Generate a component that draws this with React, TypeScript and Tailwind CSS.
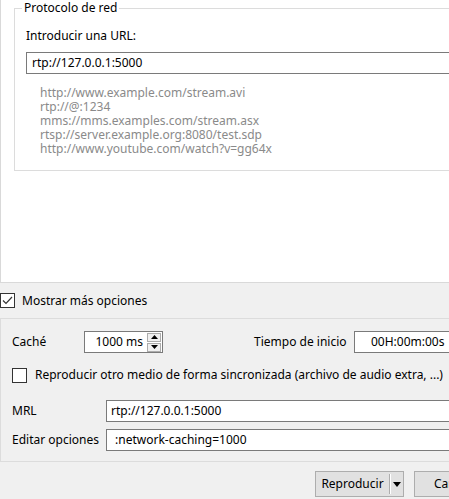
import React from "react";

function Check({ checked, className = "" }: { checked?: boolean; className?: string }) {
  return (
    <div className={"w-[15px] h-[15px] border border-[#333333] bg-white flex items-center justify-center shrink-0 " + className}>
      {checked && (
        <svg width="11" height="11" viewBox="0 0 11 11">
          <polyline points="1,5.5 4,8.5 10,2" fill="none" stroke="#333333" strokeWidth="1.2" />
        </svg>
      )}
    </div>
  );
}

export default function App() {
  return (
    <div className="w-[449px] h-[499px] overflow-hidden bg-[#f0f0f0] font-['Noto_Sans',sans-serif] text-[12px] leading-[16px] text-black">
      {/* URL panel */}
      <div className="w-[480px] h-[283px] bg-white border-l border-b border-[#d9d9d9]">
        <fieldset className="ml-[13px] w-[480px] border border-[#dcdcdc] px-[11px] pb-[14px]">
          <legend className="ml-[-4px] px-[2px]">Protocolo de red</legend>
          <div className="mt-[12px] leading-[16px]">Introducir una URL:</div>
          <div className="mt-[8px] h-[22px] border border-[#7a7a7a] bg-white flex items-center pl-[5px]">
            rtp://127.0.0.1:5000
          </div>
          <div className="mt-[12px] pl-[14px] text-[#8a8a8a] leading-[14px]">
            <div>http://www.example.com/stream.avi</div>
            <div>rtp://@:1234</div>
            <div>mms://mms.examples.com/stream.asx</div>
            <div>rtsp://server.example.org:8080/test.sdp</div>
            <div>http://www.youtube.com/watch?v=gg64x</div>
          </div>
        </fieldset>
      </div>

      {/* Show more options */}
      <div className="mt-[10px] flex items-center h-[15px]">
        <Check checked />
        <span className="ml-[7px] whitespace-nowrap">Mostrar más opciones</span>
      </div>

      {/* Options panel */}
      <div className="mt-[10px] w-[480px] h-[144px] border border-[#dcdcdc] pl-[11px] pt-[12px]">
        <div className="flex items-center h-[22px]">
          <span className="w-[72px] shrink-0">Caché</span>
          <div className="w-[79px] h-[22px] border border-[#7a7a7a] bg-white flex items-center shrink-0">
            <span className="flex-1 text-right pr-[4px]">1000 ms</span>
            <div className="flex flex-col mr-[1px] gap-[1px]">
              <div className="w-[14px] h-[9px] border border-[#acacac] bg-[#f0f0f0] flex items-center justify-center">
                <svg width="7" height="4" viewBox="0 0 7 4"><polygon points="0,4 7,4 3.5,0" fill="#000" /></svg>
              </div>
              <div className="w-[14px] h-[9px] border border-[#acacac] bg-[#f0f0f0] flex items-center justify-center">
                <svg width="7" height="4" viewBox="0 0 7 4"><polygon points="0,0 7,0 3.5,4" fill="#000" /></svg>
              </div>
            </div>
          </div>
          <span className="ml-[91px] w-[100px] shrink-0 whitespace-nowrap">Tiempo de inicio</span>
          <div className="w-[120px] h-[22px] border border-[#7a7a7a] bg-white flex items-center pl-[16px] shrink-0">
            00H:00m:00s
          </div>
        </div>

        <div className="mt-[14px] flex items-center h-[16px]">
          <Check />
          <span className="ml-[8px] whitespace-nowrap">Reproducir otro medio de forma sincronizada (archivo de audio extra, ...)</span>
        </div>

        <div className="mt-[17px] flex items-center h-[22px]">
          <span className="w-[94px] shrink-0">MRL</span>
          <div className="flex-1 h-[22px] border border-[#7a7a7a] bg-white flex items-center pl-[4px]">
            rtp://127.0.0.1:5000
          </div>
        </div>
        <div className="mt-[7px] flex items-center h-[22px]">
          <span className="w-[94px] shrink-0 whitespace-nowrap">Editar opciones</span>
          <div className="flex-1 h-[22px] border border-[#7a7a7a] bg-white flex items-center pl-[8px]">
            :network-caching=1000
          </div>
        </div>
      </div>

      {/* Buttons */}
      <div className="mt-[9px] flex pl-[315px] gap-[10px]">
        <div className="w-[89px] h-[26px] border border-[#adadad] bg-[#e1e1e1] flex items-stretch shrink-0">
          <div className="w-[73px] flex items-center justify-center">Reproducir</div>
          <div className="w-[1px] bg-[#adadad] my-[2px]" />
          <div className="w-[1px] bg-white my-[2px]" />
          <div className="flex-1 flex items-center justify-center">
            <svg width="8" height="5" viewBox="0 0 8 5"><polygon points="0,0 8,0 4,5" fill="#000" /></svg>
          </div>
        </div>
        <div className="w-[89px] h-[26px] border border-[#adadad] bg-[#e1e1e1] flex items-center justify-center shrink-0">
          Cancelar
        </div>
      </div>
    </div>
  );
}
